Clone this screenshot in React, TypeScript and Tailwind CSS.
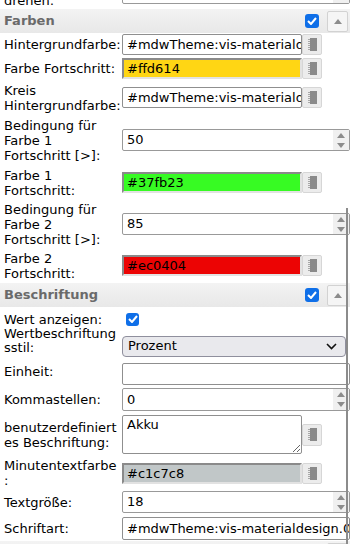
import React from 'react';

const font = { fontFamily: '"DejaVu Sans", Verdana, sans-serif' };

const Up = () => (
    <svg width="8" height="5" viewBox="0 0 8 5">
        <path d="M0 5 L4 0 L8 5 Z" fill="#8c8c8c" />
    </svg>
);

const Down = () => (
    <svg width="8" height="5" viewBox="0 0 8 5">
        <path d="M0 0 L4 5 L8 0 Z" fill="#8c8c8c" />
    </svg>
);

const PickerIcon = () => (
    <svg width="9" height="13" viewBox="0 0 9 13">
        <rect x="2" y="0" width="7" height="13" fill="#8a8a8a" />
        <rect x="0" y="1" width="2" height="1" fill="#a8a8a8" />
        <rect x="0" y="3" width="2" height="1" fill="#a8a8a8" />
        <rect x="0" y="5" width="2" height="1" fill="#a8a8a8" />
        <rect x="0" y="7" width="2" height="1" fill="#a8a8a8" />
        <rect x="0" y="9" width="2" height="1" fill="#a8a8a8" />
        <rect x="0" y="11" width="2" height="1" fill="#a8a8a8" />
    </svg>
);

const Check = ({ size }: { size: string }) => (
    <span className={`${size} rounded-[3px] bg-[#0f6fe8] flex items-center justify-center`}>
        <svg width="10" height="8" viewBox="0 0 10 8">
            <path d="M1 4 L4 7 L9 1" stroke="white" strokeWidth="2" fill="none" />
        </svg>
    </span>
);

const Row: React.FC<{ h: string; lines: string[]; labelClass?: string; children?: React.ReactNode }> = ({
    h,
    lines,
    labelClass = 'leading-[15px]',
    children,
}) => (
    <div className={`flex items-center ${h}`}>
        <div className={`w-[122px] shrink-0 pl-[4px] ${labelClass}`}>
            {lines.map((l, i) => (
                <div key={i} className="whitespace-nowrap">
                    {l}
                </div>
            ))}
        </div>
        {children}
    </div>
);

const Header: React.FC<{ title: string }> = ({ title }) => (
    <div className="flex items-center h-[24px] bg-gradient-to-b from-[#f3f3f3] to-[#e8e8e8]">
        <span className="flex-1 pl-[4px] font-bold text-[#6a6a6a]">{title}</span>
        <Check size="w-[14px] h-[14px]" />
        <div className="ml-[8px] mr-[2px] w-[21px] h-[21px] border border-[#d2d2d2] bg-[#f5f5f5] rounded-[2px] flex items-center justify-center">
            <Up />
        </div>
    </div>
);

const PickBtn: React.FC<{ h: string }> = ({ h }) => (
    <div className={`w-[20px] ${h} border border-[#d6d6d6] bg-[#ececec] rounded-[2px] flex items-center justify-center`}>
        <PickerIcon />
    </div>
);

const TextColor: React.FC<{ value: string }> = ({ value }) => (
    <div className="flex items-center">
        <div className="w-[180px] h-[21px] border border-[#8f8f8f] rounded-[2px] bg-white pl-[4px] leading-[19px] overflow-hidden whitespace-nowrap">
            {value}
        </div>
        <PickBtn h="h-[21px]" />
    </div>
);

const FilledColor: React.FC<{ value: string; bg: string }> = ({ value, bg }) => (
    <div className="flex items-center">
        <div
            className={`w-[180px] h-[21px] border-2 border-t-[#8a8a8a] border-l-[#8a8a8a] border-r-[#e2e2e2] border-b-[#e2e2e2] ${bg} pl-[3px] leading-[17px] overflow-hidden whitespace-nowrap`}
        >
            {value}
        </div>
        <PickBtn h="h-[21px]" />
    </div>
);

const NumberField: React.FC<{ value: string; h: string }> = ({ value, h }) => (
    <div className={`flex w-[228px] ${h} border border-[#999] rounded-[2px] bg-white`}>
        <div className="flex-1 pl-[4px] flex items-center">{value}</div>
        <div className="w-[16px] flex flex-col items-center justify-center gap-[5px] bg-[#f0f0f0]">
            <Up />
            <Down />
        </div>
    </div>
);

export default function App() {
    return (
        <div className="relative w-[350px] h-[544px] overflow-hidden bg-white text-[13px] text-black" style={font}>
            <div className="-mt-[24px]">
                <Row h="h-[33px]" lines={['Uhrzeigersinn', 'drehen:']}>
                    <NumberField value="0" h="h-[22px]" />
                </Row>

                <Header title="Farben" />

                <Row h="h-[23px]" lines={['Hintergrundfarbe:']}>
                    <TextColor value="#mdwTheme:vis-materialdesign.0.colors.light.circle" />
                </Row>
                <Row h="h-[24px]" lines={['Farbe Fortschritt:']}>
                    <FilledColor value="#ffd614" bg="bg-[#ffd614]" />
                </Row>
                <Row h="h-[35px]" lines={['Kreis', 'Hintergrundfarbe:']}>
                    <TextColor value="#mdwTheme:vis-materialdesign.0.colors.light.circle_background" />
                </Row>
                <Row h="h-[50px]" lines={['Bedingung für', 'Farbe 1', 'Fortschritt [>]:']}>
                    <NumberField value="50" h="h-[22px]" />
                </Row>
                <Row h="h-[35px]" lines={['Farbe 1', 'Fortschritt:']}>
                    <FilledColor value="#37fb23" bg="bg-[#37fb23]" />
                </Row>
                <Row h="h-[48px]" lines={['Bedingung für', 'Farbe 2', 'Fortschritt [>]:']}>
                    <NumberField value="85" h="h-[22px]" />
                </Row>
                <Row h="h-[35px]" lines={['Farbe 2', 'Fortschritt:']}>
                    <FilledColor value="#ec0404" bg="bg-[#ec0404]" />
                </Row>

                <Header title="Beschriftung" />

                <Row h="h-[24px]" lines={['Wert anzeigen:']}>
                    <div className="pl-[4px]">
                        <Check size="w-[13px] h-[13px]" />
                    </div>
                </Row>
                <Row h="h-[30px]" lines={['Wertbeschriftung', 'sstil:']} labelClass="leading-[14px] mb-[10px]">
                    <div className="w-[224px] h-[21px] border border-[#8f8f9d] rounded-[4px] bg-[#e9e9ed] flex items-center pl-[5px] pr-[8px]">
                        <span className="flex-1">Prozent</span>
                        <svg width="11" height="7" viewBox="0 0 11 7">
                            <path d="M1 1 L5.5 5.5 L10 1" stroke="#111" strokeWidth="1.6" fill="none" />
                        </svg>
                    </div>
                </Row>
                <Row h="h-[26px]" lines={['Einheit:']} labelClass="leading-[15px] mb-[6px]">
                    <div className="w-[230px] h-[22px] border border-[#8f8f8f] rounded-[2px] bg-white" />
                </Row>
                <Row h="h-[25px]" lines={['Kommastellen:']}>
                    <NumberField value="0" h="h-[23px]" />
                </Row>
                <Row h="h-[45px]" lines={['benutzerdefiniert', 'es Beschriftung:']}>
                    <div className="flex items-center">
                        <textarea
                            readOnly
                            value="Akku"
                            className="w-[180px] h-[39px] border border-[#8f8f8f] rounded-[2px] bg-white px-[4px] py-[1px] leading-[15px] text-[13px] outline-none resize-y"
                            style={font}
                        />
                        <PickBtn h="h-[22px]" />
                    </div>
                </Row>
                <Row h="h-[32px]" lines={['Minutentextfarbe', ':']}>
                    <FilledColor value="#c1c7c8" bg="bg-[#c1c7c8]" />
                </Row>
                <Row h="h-[26px]" lines={['Textgröße:']}>
                    <NumberField value="18" h="h-[22px]" />
                </Row>
                <Row h="h-[26px]" lines={['Schriftart:']}>
                    <div className="w-[228px] h-[23px] border border-[#8f8f8f] rounded-[2px] bg-white pl-[4px] leading-[21px] overflow-hidden whitespace-nowrap">
                        #mdwTheme:vis-materialdesign.0.fonts.circular.value
                    </div>
                </Row>

                <Header title="Sichtbarkeit" />
            </div>

            <div className="absolute left-[346px] top-[208px] w-[2px] h-[336px] bg-[#8c8c8c]" />
        </div>
    );
}
